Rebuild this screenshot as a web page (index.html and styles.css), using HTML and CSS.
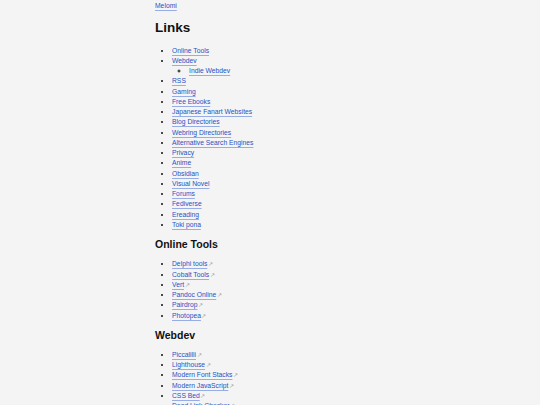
FILE: index.html
```html
<!DOCTYPE html>
<html lang="en">
<head>
<meta charset="utf-8">
<title>Links</title>
<link rel="stylesheet" href="styles.css">
</head>
<body>
<main class="page">
  <nav class="crumb"><a href="#">Melomi</a></nav>
  <h1 class="title">Links</h1>
  <ul class="list">
    <li><a href="#">Online Tools</a></li>
    <li><a href="#">Webdev</a>
      <ul class="sub">
        <li><a href="#">Indie Webdev</a></li>
      </ul>
    </li>
    <li><a href="#">RSS</a></li>
    <li><a href="#">Gaming</a></li>
    <li><a href="#">Free Ebooks</a></li>
    <li><a href="#">Japanese Fanart Websites</a></li>
    <li><a href="#">Blog Directories</a></li>
    <li><a href="#">Webring Directories</a></li>
    <li><a href="#">Alternative Search Engines</a></li>
    <li><a href="#">Privacy</a></li>
    <li><a href="#">Anime</a></li>
    <li><a href="#">Obsidian</a></li>
    <li><a href="#">Visual Novel</a></li>
    <li><a href="#">Forums</a></li>
    <li><a href="#">Fediverse</a></li>
    <li><a href="#">Ereading</a></li>
    <li><a href="#">Toki pona</a></li>
  </ul>
  <h2 class="section">Online Tools</h2>
  <ul class="list">
    <li><a class="ext" href="#">Delphi tools</a></li>
    <li><a class="ext" href="#">Cobalt Tools</a></li>
    <li><a class="ext" href="#">Vert</a></li>
    <li><a class="ext" href="#">Pandoc Online</a></li>
    <li><a class="ext" href="#">Pairdrop</a></li>
    <li><a class="ext" href="#">Photopea</a></li>
  </ul>
  <h2 class="section">Webdev</h2>
  <ul class="list">
    <li><a class="ext" href="#">Piccalilli</a></li>
    <li><a class="ext" href="#">Lighthouse</a></li>
    <li><a class="ext" href="#">Modern Font Stacks</a></li>
    <li><a class="ext" href="#">Modern JavaScript</a></li>
    <li><a class="ext" href="#">CSS Bed</a></li>
    <li><a class="ext" href="#">Dead Link Checker</a></li>
  </ul>
</main>
</body>
</html>
```
FILE: styles.css
```css
html, body {
  margin: 0;
  padding: 0;
  background: #f4f4f4;
}
body {
  font-family: "Liberation Sans", Arial, sans-serif;
  font-size: 6.75px;
  line-height: 10.26px;
  color: #111;
}
.page {
  width: 230px;
  margin: 0 auto;
  padding-top: 1px;
}
a {
  color: #2553c4;
  text-decoration: underline;
  text-decoration-color: #97ade6;
  text-underline-offset: 1.5px;
  text-decoration-thickness: 1px;
}
.crumb {
  line-height: 10px;
}
.title {
  font-size: 13.5px;
  line-height: 16px;
  font-weight: bold;
  margin: 8.5px 0 10px;
  color: #111;
}
.section {
  font-size: 10.5px;
  line-height: 12px;
  font-weight: bold;
  margin: 8px 0 9px;
  color: #111;
}
.list {
  margin: 0;
  padding-left: 17px;
  list-style: disc;
}
.sub {
  margin: 0;
  padding-left: 17px;
  list-style: circle;
}
.ext::after {
  content: "\2197";
  color: #999;
  font-size: 5.5px;
  margin-left: 0.5px;
  display: inline-block;
  text-decoration: none;
}
```
